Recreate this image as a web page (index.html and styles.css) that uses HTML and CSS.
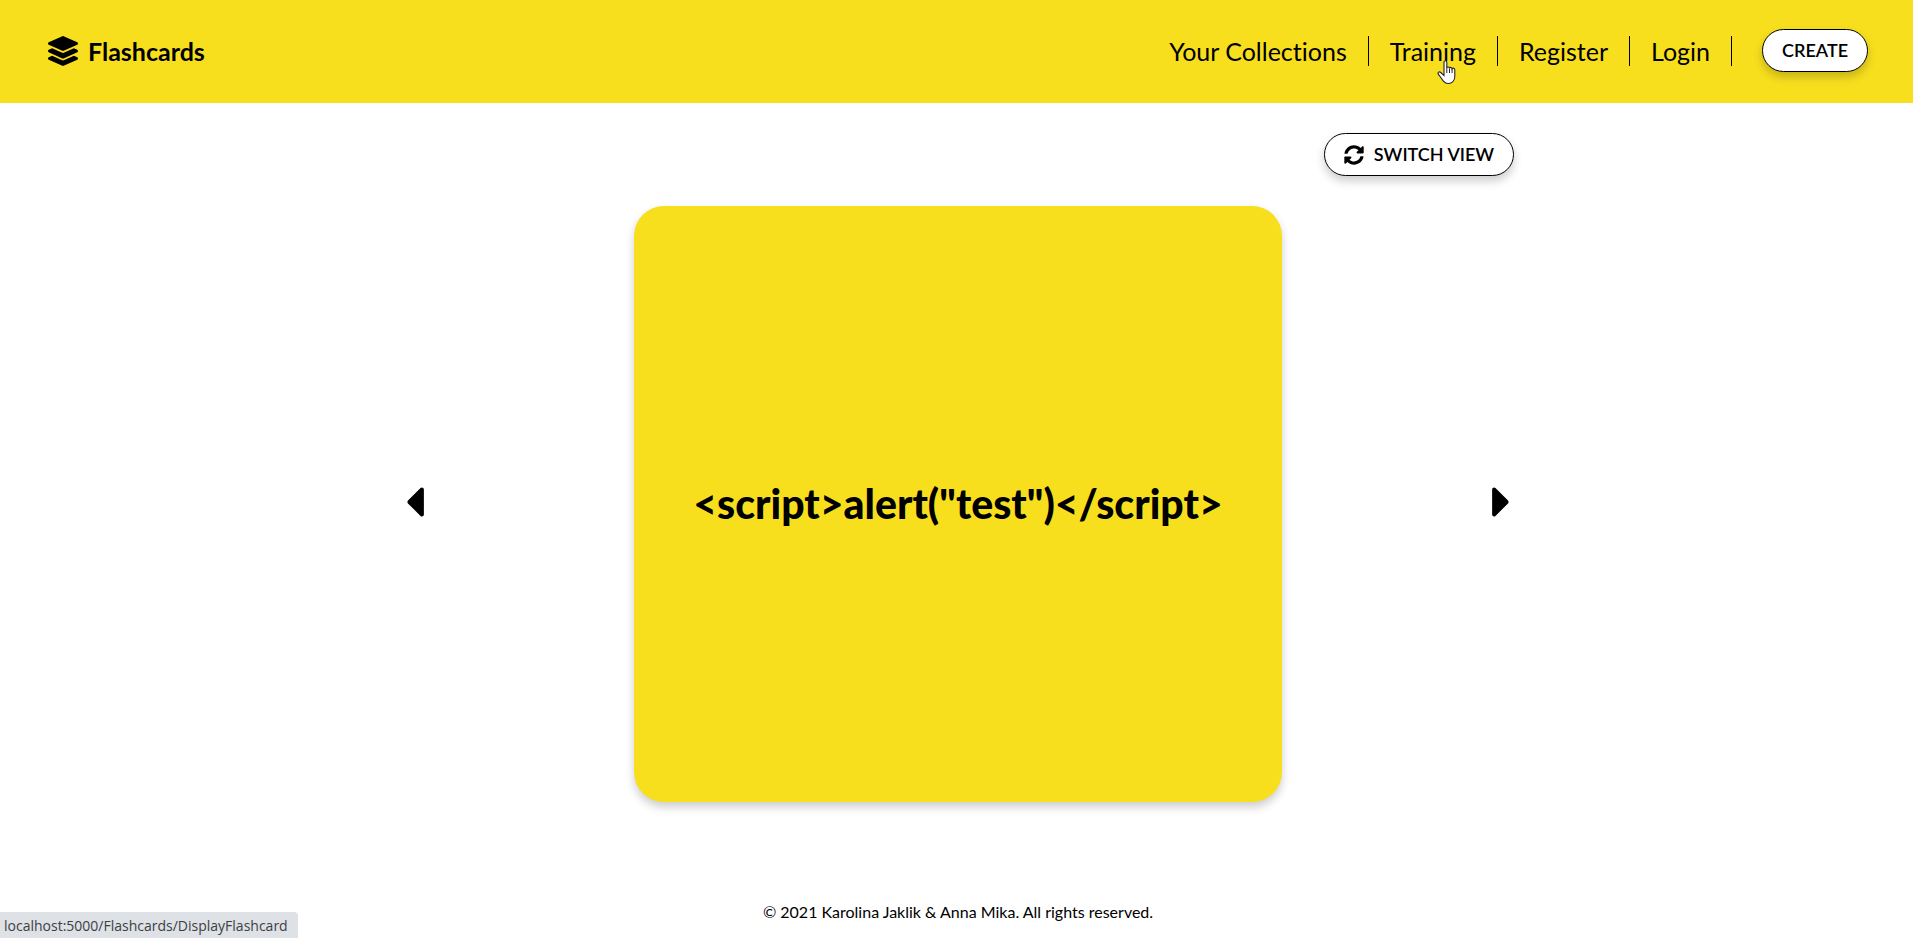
FILE: index.html
```html
<!DOCTYPE html>
<html lang="en">
<head>
<meta charset="utf-8">
<title>Flashcards</title>
<link rel="stylesheet" href="styles.css">
</head>
<body>
<header class="header">
  <a class="brand" href="#">
    <svg class="brand-icon" viewBox="0 0 512 512" aria-hidden="true"><path d="M12.41 148.02l232.94 105.67c6.8 3.09 14.49 3.09 21.29 0l232.94-105.67c16.55-7.51 16.55-32.52 0-40.03L266.65 2.31a25.607 25.607 0 0 0-21.29 0L12.41 107.98c-16.55 7.51-16.55 32.53 0 40.04zm487.18 88.28l-58.09-26.33-161.64 73.27c-7.56 3.43-15.59 5.17-23.86 5.17s-16.29-1.74-23.86-5.17L70.51 209.97l-58.1 26.33c-16.55 7.5-16.55 32.5 0 40l232.94 105.59c6.8 3.08 14.49 3.08 21.29 0L499.59 276.3c16.55-7.5 16.55-32.5 0-40zm0 127.8l-57.87-26.23-161.86 73.37c-7.56 3.43-15.59 5.17-23.86 5.17s-16.29-1.74-23.86-5.17L70.29 337.87 12.41 364.1c-16.55 7.5-16.55 32.5 0 40l232.94 105.59c6.8 3.08 14.49 3.08 21.29 0L499.59 404.1c16.55-7.5 16.55-32.5 0-40z"/></svg>
    <span>Flashcards</span>
  </a>
  <nav class="nav">
    <a class="nav-link" href="#">Your Collections</a>
    <a class="nav-link" href="#">Training
      <svg class="pointer" viewBox="0 0 19 25" aria-hidden="true"><path d="M7 2.2C7 .3 9.800.3 9.800 2.200V8c.3-1.500 2.600-1.300 2.700.2.500-1.300 2.500-.9 2.600.5.600-1 2.700-.7 2.700 1.200V16c0 4.500-2.500 7.500-6.500 7.500-3.500 0-5.300-2.300-6.800-5L1.300 14.200C.3 12.300 2.300 11.200 3.700 12.500L7 15.500Z" fill="#fff" stroke="#223" stroke-width="1.100"/><path d="M9.800 8v5M12.500 8.500V13M15.100 9v4" fill="none" stroke="#223"/></svg>
    </a>
    <a class="nav-link" href="#">Register</a>
    <a class="nav-link" href="#">Login</a>
    <button class="button create" type="button">CREATE</button>
  </nav>
</header>
<main class="main">
  <div class="toolbar">
    <button class="button" type="button">
      <svg class="sync-icon" viewBox="0 0 512 512" aria-hidden="true"><path d="M370.72 133.28C339.458 104.008 298.888 87.962 255.848 88c-77.458.068-144.328 53.178-162.791 126.850-1.344 5.363-6.122 9.150-11.651 9.150H24.103c-7.498 0-13.194-6.807-11.807-14.176C33.933 94.924 134.813 8 256 8c66.448 0 126.791 26.136 171.315 68.685L463.030 40.970C478.149 25.851 504 36.559 504 57.941V192c0 13.255-10.745 24-24 24H345.941c-21.382 0-32.090-25.851-16.971-40.971l41.750-41.749zM32 296h134.059c21.382 0 32.090 25.851 16.971 40.971l-41.750 41.750c31.262 29.273 71.835 45.319 114.876 45.280 77.418-.07 144.315-53.144 162.787-126.849 1.344-5.363 6.122-9.150 11.651-9.150h57.304c7.498 0 13.194 6.807 11.807 14.176C478.067 417.076 377.187 504 256 504c-66.448 0-126.791-26.136-171.315-68.685L48.970 471.030C33.851 486.149 8 475.441 8 454.059V320c0-13.255 10.745-24 24-24z"/></svg>
      SWITCH VIEW
    </button>
  </div>
  <section class="deck">
    <button class="arrow" type="button" aria-label="Previous card">
      <svg viewBox="0 0 192 512" aria-hidden="true"><path d="M192 127.338v257.324c0 17.818-21.543 26.741-34.142 14.142L29.196 270.142c-7.810-7.810-7.810-20.474 0-28.284l128.662-128.662c12.599-12.600 34.142-3.676 34.142 14.142z"/></svg>
    </button>
    <article class="card"><h1 class="card-text">&lt;script&gt;alert("test")&lt;/script&gt;</h1></article>
    <button class="arrow" type="button" aria-label="Next card">
      <svg viewBox="0 0 192 512" aria-hidden="true"><path d="M0 384.662V127.338c0-17.818 21.543-26.741 34.142-14.142l128.662 128.662c7.810 7.810 7.810 20.474 0 28.284L34.142 398.804C21.543 411.404 0 402.480 0 384.662z"/></svg>
    </button>
  </section>
</main>
<footer class="footer">© 2021 Karolina Jaklik &amp; Anna Mika. All rights reserved.</footer>
<div class="status">localhost:5000/Flashcards/DisplayFlashcard</div>
</body>
</html>
```
FILE: styles.css
```css
* {
  box-sizing: border-box;
}

body {
  display: flex;
  flex-direction: column;
  min-height: 100vh;
  margin: 0;
  background: #fff;
  color: #000;
  font-family: Lato, "Liberation Sans", sans-serif;
  font-variant-ligatures: none;
}

.header {
  display: flex;
  align-items: center;
  justify-content: space-between;
  padding: 29px 45px 31px 48px;
  background: #f7df1e;
}

.brand {
  display: flex;
  align-items: center;
  gap: 10px;
  color: #000;
  font-size: 25px;
  font-weight: 700;
  line-height: 30px;
  text-decoration: none;
}

.brand-icon {
  width: 30px;
  height: 30px;
}

.nav {
  display: flex;
  align-items: center;
}

.nav-link {
  position: relative;
  padding: 0 21px;
  border-right: 1px solid #000;
  color: #000;
  font-size: 25px;
  line-height: 30px;
  text-decoration: none;
}

.pointer {
  position: absolute;
  top: 24px;
  left: 68px;
  width: 19px;
  height: 25px;
}

.button {
  display: flex;
  align-items: center;
  gap: 10px;
  padding: 10px 19px;
  border: 1px solid #000;
  border-radius: 24px;
  background: #fff;
  box-shadow: 0 5px 10px rgba(0, 0, 0, 0.2);
  color: #000;
  font-family: inherit;
  font-size: 18px;
  font-weight: 600;
  line-height: 21px;
}

.create {
  margin-left: 30px;
}

.sync-icon {
  width: 20px;
  height: 20px;
}

.main {
  width: 58.4%;
  margin: 0 auto;
  padding: 30px 0 0 3px;
}

.toolbar {
  display: flex;
  justify-content: flex-end;
  padding-right: 1px;
}

.deck {
  display: flex;
  align-items: center;
  justify-content: space-between;
  margin: 30px 4px 0;
}

.arrow {
  margin: 0 0 4px;
  padding: 0;
  border: 0;
  background: none;
}

.arrow svg {
  display: block;
  width: 19px;
  height: 50px;
}

.card {
  display: flex;
  align-items: center;
  justify-content: center;
  min-width: 648px;
  min-height: 596px;
  padding: 48px;
  border-radius: 30px;
  background: #f7df1e;
  box-shadow: 0 5px 10px rgba(0, 0, 0, 0.2);
}

.card-text {
  margin: 0;
  font-size: 41px;
  font-weight: 900;
  line-height: 48px;
}

.footer {
  margin-top: auto;
  padding: 0 0 16px 3px;
  font-size: 16px;
  line-height: 20px;
  text-align: center;
}

.status {
  position: fixed;
  bottom: 0;
  left: 0;
  padding: 4px 10px 2px 4px;
  border-top-right-radius: 4px;
  background: #dee1e6;
  color: #3c4043;
  font-family: "Open Sans", "Noto Sans", sans-serif;
  font-size: 14px;
  line-height: 20px;
}
```
